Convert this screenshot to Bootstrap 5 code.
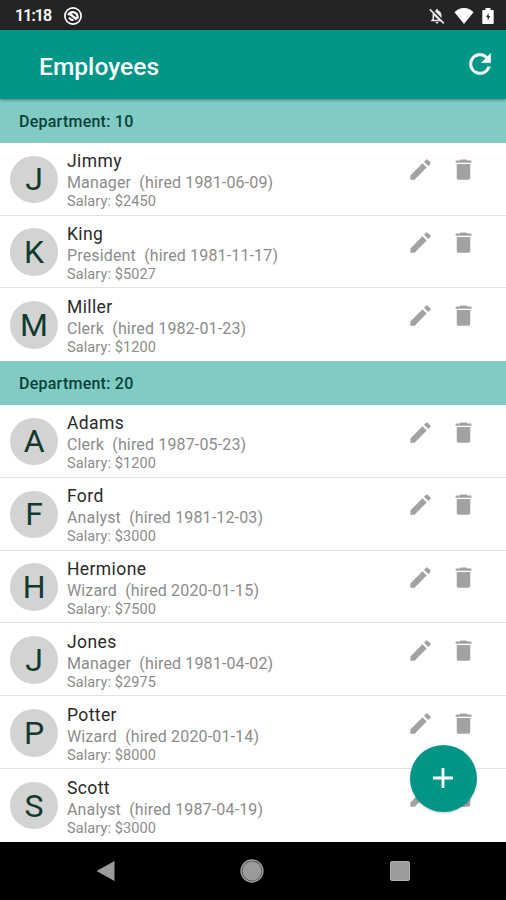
<!DOCTYPE html>
<html lang="en">
<head>
<meta charset="utf-8">
<meta name="viewport" content="width=device-width, initial-scale=1">
<title>Employees</title>
<link href="https://cdn.jsdelivr.net/npm/bootstrap@5.3.0/dist/css/bootstrap.min.css" rel="stylesheet">
<style>
  body { font-family: Roboto, "Liberation Sans", sans-serif; background: #fff; }
  svg { display: block; flex: none; }
  .screen { width: 506px; height: 900px; }
  .status-bar { height: 30px; background: #242424; padding: 1px 12px 0 15px; }
  .clock { font-size: 16px; font-weight: 500; letter-spacing: -.9px; width: 48px; -webkit-text-stroke: .2px #fff; }
  .app-bar { height: 69.3px; background: #009687; padding: 0 10px 0 39px; box-shadow: 0 1px 3px rgba(0,0,0,.4); z-index: 1; }
  .app-title { font-size: 24.5px; font-weight: 500; letter-spacing: .05px; padding-top: 5px; }
  .app-bar svg { margin-bottom: 2px; }
  .dept { height: 43.4px; background: #80cbc4; color: #0b4039; font-size: 16px; font-weight: 500; letter-spacing: .24px; padding-left: 19px; padding-top: 2px; }
  .emp { height: 72.9px; padding: 7.3px 29px 0 10.4px; border-bottom: 1px solid #e2e2e2; }
  .emp.last-in-group { border-bottom-color: #fff; }
  .avatar { width: 47.4px; height: 47.4px; background: #d3d3d3; color: #12392e; font-size: 32px; margin: 5.6px 9.2px 0 0; }
  .name { font-size: 17.5px; line-height: 22px; letter-spacing: .4px; color: #2a2a2a; }
  .job { font-size: 16px; line-height: 21px; letter-spacing: .15px; color: #8c8c8c; white-space: pre; }
  .pay { font-size: 14.5px; line-height: 17px; letter-spacing: .1px; color: #8c8c8c; }
  .actions { gap: 16.5px; padding-top: 6.5px; color: #a2a2a2; }
  .fab { right: 29.5px; bottom: 88.5px; width: 67px; height: 67px; background: #009687; box-shadow: 0 1px 2px rgba(0,0,0,.22); }
  .nav-bar { height: 58px; background: #000; padding: 0 96.5px 0 95.5px; }
</style>
</head>
<body>
<svg class="d-none" aria-hidden="true">
  <symbol id="pencil" viewBox="0 0 24 24"><path fill="currentColor" d="M3 17.250V21h3.750L17.500 10.250l-3.750-3.750L3 17.250zM20.710 7.040a1 1 0 0 0 0-1.410l-2.340-2.340a1 1 0 0 0-1.410 0l-1.830 1.830 3.750 3.750 1.830-1.830z"/></symbol>
  <symbol id="trash" viewBox="0 0 24 24"><path fill="currentColor" d="M6 19.500c0 .800.700 1.500 1.500 1.500h9c.800 0 1.500-.700 1.500-1.500V7H6v12.500zM19 4h-3.500l-1-1h-5l-1 1H5v2h14V4z"/></symbol>
</svg>
<div class="screen position-relative d-flex flex-column overflow-hidden">
  <div class="status-bar d-flex align-items-center text-white flex-shrink-0">
    <span class="clock">11:18</span>
    <svg width="20" height="20" viewBox="0 0 20 20" fill="none" stroke="#fff"><circle cx="10" cy="10" r="8.100" stroke-width="1.700"/><path stroke-width="2.300" d="M5.200 9.200C6.500 6 11.500 4.800 14 8.500c.800 1.500.700 3 .100 4.200M7.500 8.300l6.200 5.200"/><path stroke-width="1.800" d="M6 11.500c.900 1.700 2.500 2.700 4.600 2.600"/></svg>
    <svg class="ms-auto" width="18" height="18" viewBox="0 0 24 24"><path fill="#e8e8e8" d="M12 22a2 2 0 0 0 2-2h-4a2 2 0 0 0 2 2zM18 14.680V11c0-3.080-1.640-5.640-4.500-6.320V4a1.500 1.500 0 0 0-3 0v.680c-.600.140-1.100.360-1.580.640z"/><path fill="#e8e8e8" fill-rule="evenodd" d="M6.800 7.560C6.280 8.550 6 9.740 6 11v5l-2 2v1h13.730zM8 11.500V17h5.800z"/><path stroke="#e8e8e8" stroke-width="2.200" d="m2.500 3.200 18.500 18.600"/></svg>
    <svg class="mx-2" width="20" height="18" viewBox="0 0 20 18"><path fill="#fff" d="M10 17 .500 5.200C3 2.500 6.500 1 10 1s7 1.500 9.500 4.200z"/></svg>
    <svg width="12" height="18" viewBox="0 0 12 18"><path fill="#fff" d="M1 3h2.500V1h5v2H11a.700.700 0 0 1 .700.700v12.600a.700.700 0 0 1-.700.700H1a.700.700 0 0 1-.700-.700V3.700A.700.700 0 0 1 1 3z"/><path fill="#242424" d="M6.600 6.200 4 10.300h1.700v3.200l2.500-4.400H6.600z"/></svg>
  </div>
  <header class="app-bar d-flex align-items-center justify-content-between text-white position-relative flex-shrink-0">
    <div class="app-title">Employees</div>
    <svg width="32" height="32" viewBox="0 0 24 24"><path fill="#fff" stroke="#fff" stroke-width=".300" d="M17.650 6.350A7.958 7.958 0 0 0 12 4c-4.420 0-7.990 3.580-7.990 8s3.570 8 7.990 8c3.730 0 6.840-2.550 7.730-6h-2.080A5.990 5.990 0 0 1 12 18c-3.310 0-6-2.690-6-6s2.690-6 6-6c1.660 0 3.140.690 4.220 1.780L13 11h7V4l-2.350 2.350z"/></svg>
  </header>
  <main>
    <div class="dept d-flex align-items-center">Department: 10</div>
    <div class="emp d-flex">
      <div class="avatar rounded-circle d-flex align-items-center justify-content-center">J</div>
      <div class="flex-grow-1"><div class="name">Jimmy</div><div class="job">Manager  (hired 1981-06-09)</div><div class="pay">Salary: $2450</div></div>
      <div class="actions d-flex"><svg width="27" height="27"><use href="#pencil"/></svg><svg width="27" height="27"><use href="#trash"/></svg></div>
    </div>
    <div class="emp d-flex">
      <div class="avatar rounded-circle d-flex align-items-center justify-content-center">K</div>
      <div class="flex-grow-1"><div class="name">King</div><div class="job">President  (hired 1981-11-17)</div><div class="pay">Salary: $5027</div></div>
      <div class="actions d-flex"><svg width="27" height="27"><use href="#pencil"/></svg><svg width="27" height="27"><use href="#trash"/></svg></div>
    </div>
    <div class="emp last-in-group d-flex">
      <div class="avatar rounded-circle d-flex align-items-center justify-content-center">M</div>
      <div class="flex-grow-1"><div class="name">Miller</div><div class="job">Clerk  (hired 1982-01-23)</div><div class="pay">Salary: $1200</div></div>
      <div class="actions d-flex"><svg width="27" height="27"><use href="#pencil"/></svg><svg width="27" height="27"><use href="#trash"/></svg></div>
    </div>
    <div class="dept d-flex align-items-center">Department: 20</div>
    <div class="emp d-flex">
      <div class="avatar rounded-circle d-flex align-items-center justify-content-center">A</div>
      <div class="flex-grow-1"><div class="name">Adams</div><div class="job">Clerk  (hired 1987-05-23)</div><div class="pay">Salary: $1200</div></div>
      <div class="actions d-flex"><svg width="27" height="27"><use href="#pencil"/></svg><svg width="27" height="27"><use href="#trash"/></svg></div>
    </div>
    <div class="emp d-flex">
      <div class="avatar rounded-circle d-flex align-items-center justify-content-center">F</div>
      <div class="flex-grow-1"><div class="name">Ford</div><div class="job">Analyst  (hired 1981-12-03)</div><div class="pay">Salary: $3000</div></div>
      <div class="actions d-flex"><svg width="27" height="27"><use href="#pencil"/></svg><svg width="27" height="27"><use href="#trash"/></svg></div>
    </div>
    <div class="emp d-flex">
      <div class="avatar rounded-circle d-flex align-items-center justify-content-center">H</div>
      <div class="flex-grow-1"><div class="name">Hermione</div><div class="job">Wizard  (hired 2020-01-15)</div><div class="pay">Salary: $7500</div></div>
      <div class="actions d-flex"><svg width="27" height="27"><use href="#pencil"/></svg><svg width="27" height="27"><use href="#trash"/></svg></div>
    </div>
    <div class="emp d-flex">
      <div class="avatar rounded-circle d-flex align-items-center justify-content-center">J</div>
      <div class="flex-grow-1"><div class="name">Jones</div><div class="job">Manager  (hired 1981-04-02)</div><div class="pay">Salary: $2975</div></div>
      <div class="actions d-flex"><svg width="27" height="27"><use href="#pencil"/></svg><svg width="27" height="27"><use href="#trash"/></svg></div>
    </div>
    <div class="emp d-flex">
      <div class="avatar rounded-circle d-flex align-items-center justify-content-center">P</div>
      <div class="flex-grow-1"><div class="name">Potter</div><div class="job">Wizard  (hired 2020-01-14)</div><div class="pay">Salary: $8000</div></div>
      <div class="actions d-flex"><svg width="27" height="27"><use href="#pencil"/></svg><svg width="27" height="27"><use href="#trash"/></svg></div>
    </div>
    <div class="emp last-in-group d-flex">
      <div class="avatar rounded-circle d-flex align-items-center justify-content-center">S</div>
      <div class="flex-grow-1"><div class="name">Scott</div><div class="job">Analyst  (hired 1987-04-19)</div><div class="pay">Salary: $3000</div></div>
      <div class="actions d-flex"><svg width="27" height="27"><use href="#pencil"/></svg><svg width="27" height="27"><use href="#trash"/></svg></div>
    </div>
  </main>
  <button class="fab position-absolute btn border-0 rounded-circle p-0 d-flex align-items-center justify-content-center" aria-label="Add employee">
    <svg width="20" height="20" viewBox="0 0 20 20"><path stroke="#fff" stroke-width="2.800" d="M10 0v20M0 10h20"/></svg>
  </button>
  <nav class="nav-bar mt-auto d-flex align-items-center justify-content-between flex-shrink-0">
    <svg width="19" height="22" viewBox="0 0 19 22"><path fill="#9b9b9b" d="M18.500 1v20L.500 11z"/></svg>
    <svg width="24" height="24" viewBox="0 0 24 24"><circle cx="12" cy="12" r="11" fill="#555" stroke="#9b9b9b" stroke-width="1.300"/><circle cx="12" cy="12" r="9.500" fill="#9b9b9b"/></svg>
    <svg width="20" height="20" viewBox="0 0 20 20"><rect x=".500" y=".500" width="19" height="19" rx="1.500" fill="#9b9b9b" stroke="#b0b0b0"/></svg>
  </nav>
</div>
<script src="https://cdn.jsdelivr.net/npm/bootstrap@5.3.0/dist/js/bootstrap.bundle.min.js"></script>
</body>
</html>
